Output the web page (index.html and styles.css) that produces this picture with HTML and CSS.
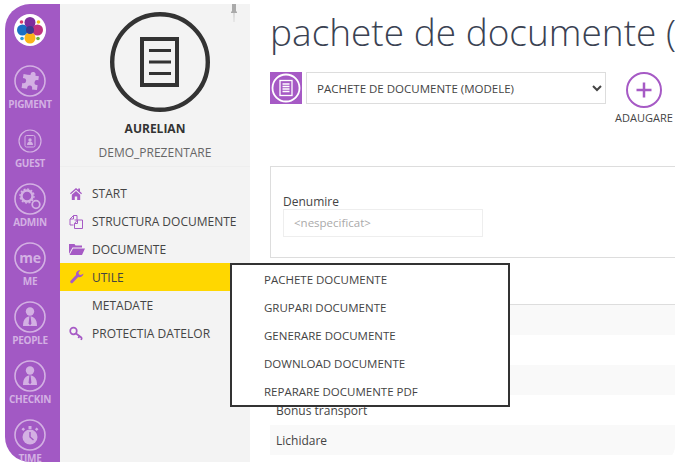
FILE: index.html
```html
<!doctype html>
<html lang="en">
  <head>
    <meta charset="UTF-8" />
    <title>Pachete de documente</title>
    <link rel="stylesheet" href="styles.css">
  </head>
  <body>
    <div class="app">
      <!-- purple module rail -->
      <nav class="rail">
        <div class="rail-logo">
          <svg width="32" height="32" viewBox="0 0 32 32">
            <circle cx="16" cy="16" r="16" fill="#fff"/>
            <circle cx="8.500" cy="16" r="5.500" fill="#1a6fc4"/>
            <circle cx="23.500" cy="16" r="5.500" fill="#c0317f"/>
            <circle cx="16" cy="24" r="5.500" fill="#fbb317"/>
            <circle cx="16" cy="8.500" r="5.500" fill="#7d2d9c"/>
            <circle cx="16" cy="16" r="4" fill="#3e3a8c"/>
            <circle cx="7.500" cy="8" r="1.800" fill="#d93a6a"/>
            <circle cx="24.500" cy="8" r="1.800" fill="#f2c21b"/>
            <circle cx="8" cy="24.500" r="1.800" fill="#2b9ae0"/>
            <circle cx="24" cy="24.500" r="1.800" fill="#6db33f"/>
          </svg>
        </div>
        <div class="rail-item">
          <svg class="rail-icon" viewBox="0 0 32 32">
            <circle cx="16" cy="16" r="15" class="ring"/>
            <path class="fill" d="M13 9h3v-1a2.500 2.500 0 0 1 5 0v1h3.500v4h-1a2.500 2.500 0 0 0 0 5h1v5h-5v-1a2.500 2.500 0 0 0-5 0v1h-5.500v-5h1a2.500 2.500 0 0 0 0-5h-1v-4z" transform="translate(-.5 1) rotate(8 16 16)"/>
          </svg>
          <span>PIGMENT</span>
        </div>
        <div class="rail-item">
          <svg class="rail-icon small" viewBox="0 0 24 24">
            <circle cx="12" cy="12" r="11" class="ring thin"/>
            <rect x="7" y="6.500" width="10" height="11.500" rx="1.500" class="line"/>
            <circle cx="12" cy="11" r="1.700" class="fill"/>
            <path class="fill" d="M9 16c0-2.500 1.500-3.500 3-3.500s3 1 3 3.500z"/>
          </svg>
          <span>GUEST</span>
        </div>
        <div class="rail-item">
          <svg class="rail-icon" viewBox="0 0 32 32">
            <circle cx="16" cy="16" r="15" class="ring"/>
            <circle cx="13" cy="13" r="5.500" class="gear"/>
            <circle cx="13" cy="13" r="7" class="gear-teeth"/>
            <circle cx="22" cy="21.500" r="3.800" class="gear2"/>
          </svg>
          <span>ADMIN</span>
        </div>
        <div class="rail-item">
          <svg class="rail-icon" viewBox="0 0 32 32">
            <circle cx="16" cy="16" r="15" class="ring"/>
            <text x="16" y="20.500" text-anchor="middle" class="me-text">me</text>
          </svg>
          <span>ME</span>
        </div>
        <div class="rail-item">
          <svg class="rail-icon" viewBox="0 0 32 32">
            <circle cx="16" cy="16" r="15" class="ring"/>
            <circle cx="16" cy="10.500" r="4.200" class="fill"/>
            <path class="fill" d="M9 25c0-7 3-9.500 7-9.500s7 2.500 7 9.500z"/>
            <path class="tie" d="M15.400 15.500h1.200l.8 7-1.400 2-1.400-2z"/>
          </svg>
          <span>PEOPLE</span>
        </div>
        <div class="rail-item">
          <svg class="rail-icon" viewBox="0 0 32 32">
            <circle cx="16" cy="16" r="15" class="ring"/>
            <circle cx="16" cy="10.500" r="4.200" class="fill"/>
            <path class="fill" d="M9 25c0-7 3-9.500 7-9.500s7 2.500 7 9.500z"/>
            <path class="tie" d="M15.400 15.500h1.200l.8 7-1.400 2-1.400-2z"/>
          </svg>
          <span>CHECKIN</span>
        </div>
        <div class="rail-item">
          <svg class="rail-icon" viewBox="0 0 32 32">
            <circle cx="16" cy="16" r="15" class="ring"/>
            <circle cx="16" cy="18" r="7.500" class="fill"/>
            <rect x="14.500" y="7" width="3" height="3" class="fill"/>
            <rect x="21.500" y="9" width="2.500" height="2.500" class="fill" transform="rotate(45 22.700 10.200)"/>
            <rect x="8" y="9" width="2.500" height="2.500" class="fill" transform="rotate(-45 9.200 10.200)"/>
            <path class="hand" d="M16 13v5l3.500 3"/>
          </svg>
          <span>TIME</span>
        </div>
      </nav>

      <!-- user + menu -->
      <aside class="side">
        <svg class="pin" width="8" height="18" viewBox="0 0 8 18">
          <path d="M2 0h4v7l1 1v1H1V8l1-1z" fill="#aaa"/>
          <path d="M3.500 9h1l-.3 9h-.4z" fill="#bbb"/>
        </svg>
        <div class="user">
          <svg class="avatar" width="100" height="100" viewBox="0 0 100 100">
            <circle cx="50" cy="50" r="47.800" fill="none" stroke="#333" stroke-width="4.400"/>
            <rect x="32" y="27" width="35" height="46" fill="none" stroke="#333" stroke-width="4"/>
            <path d="M39 38.500h22M39 50h22M39 61.500h22" stroke="#333" stroke-width="3"/>
          </svg>
          <div class="user-name">AURELIAN</div>
          <div class="user-org">DEMO_PREZENTARE</div>
        </div>
        <ul class="menu">
          <li class="menu-item">
            <svg class="menu-icon" viewBox="0 0 16 16"><path class="mi-fill" d="M7 3 1 8.300l.8.900L7 4.700l5.200 4.500.8-.9-2-1.800V3.500H9.200v1.300zM2.800 9.800 7 6l4.200 3.800V15H8.200v-3.500H5.800V15h-3z"/></svg>
            START
          </li>
          <li class="menu-item">
            <svg class="menu-icon" viewBox="0 0 16 16"><path class="mi-line" d="M4.500 12H1V6l3.500-3.500h3.500V7M4.500 2.500V6H1M5.500 7H13.500V15.500H5.500V10.500L8.500 7V10.500H5.500"/></svg>
            STRUCTURA DOCUMENTE
          </li>
          <li class="menu-item">
            <svg class="menu-icon" viewBox="0 0 16 16"><path class="mi-fill" d="M0 3h5.500l1 1.500H13V6.500H3.500L0 13zM4 7.500h12l-3 6.500H.5z"/></svg>
            DOCUMENTE
          </li>
          <li class="menu-item active">
            <svg class="menu-icon" viewBox="0 0 16 16"><path class="mi-fill" d="M14.500 4.500a4 4 0 0 1-5.300 3.500L3.800 13.800a1.500 1.500 0 0 1-2.200-2.100L7 6a4 4 0 0 1 4.500-4.700L9.500 3.500l.5 2 2 .5z"/></svg>
            UTILE
          </li>
          <li class="menu-item"><span class="menu-icon"></span>METADATE</li>
          <li class="menu-item">
            <svg class="menu-icon" viewBox="0 0 16 16"><circle class="mi-line key" cx="4.500" cy="6" r="3.300"/><path class="mi-line key" d="m7 8.500 6 4.500M10.500 11l-1.200 2M13 13l-1 1.800"/></svg>
            PROTECTIA DATELOR
          </li>
        </ul>
      </aside>

      <main class="main">
        <h1 class="page-title">pachete de documente (</h1>
        <div class="toolbar">
          <div class="module-icon">
            <svg width="32" height="32" viewBox="0 0 32 32">
              <circle cx="16" cy="16" r="13.500" fill="none" stroke="#fff" stroke-width="1.800"/>
              <rect x="10" y="8.500" width="12" height="15" fill="none" stroke="#fff" stroke-width="1.300"/>
              <path d="M12.500 12h7M12.500 14.500h7M12.500 17h7M12.500 19.500h7" stroke="#fff" stroke-width="1.300"/>
            </svg>
          </div>
          <select class="model-select">
            <option>PACHETE DE DOCUMENTE (MODELE)</option>
          </select>
          <div class="add-btn">
            <svg width="36" height="36" viewBox="0 0 36 36">
              <circle cx="18" cy="18" r="17" fill="none" stroke="#a65ac5" stroke-width="2"/>
              <path d="M18 10.500v15M10.500 18h15" stroke="#a65ac5" stroke-width="2.500"/>
            </svg>
            <span>ADAUGARE</span>
          </div>
        </div>
        <div class="filter-box">
          <label class="field-label">Denumire</label>
          <div class="field-input">&lt;nespecificat&gt;</div>
        </div>
        <div class="rows">
          <div class="row alt"></div>
          <div class="row"></div>
          <div class="row alt"></div>
          <div class="row">Bonus transport</div>
          <div class="row alt">Lichidare</div>
        </div>
      </main>

      <!-- flyout over the content -->
      <ul class="flyout">
        <li>PACHETE DOCUMENTE</li>
        <li>GRUPARI DOCUMENTE</li>
        <li>GENERARE DOCUMENTE</li>
        <li>DOWNLOAD DOCUMENTE</li>
        <li>REPARARE DOCUMENTE PDF</li>
      </ul>
    </div>
  </body>
</html>
```

FILE: styles.css
```css
html, body {
  margin: 0;
  height: 100%;
  background: #fff;
  overflow: hidden;
}
body {
  padding: 4px 5px;
  box-sizing: border-box;
  font-family: "Open Sans", "Noto Sans", Arial, sans-serif;
  color: #444;
}
ul {
  list-style: none;
  margin: 0;
  padding: 0;
}
.app {
  position: relative;
  display: flex;
  width: 670px;
  height: 458px;
  overflow: hidden;
  border-radius: 25px 0 16px 25px;
  background: #fff;
}

/* Rail */
.rail {
  width: 55px;
  flex: none;
  background: #a259c4;
  display: flex;
  flex-direction: column;
  align-items: center;
  padding: 10px 5px 0 0;
  box-sizing: border-box;
  overflow: hidden;
}
.rail-logo {
  height: 32px;
  margin-bottom: 19px;
}
.rail-item {
  display: flex;
  flex-direction: column;
  align-items: center;
  height: 59px;
  flex: none;
  color: #d3b0e3;
  font-size: 10px;
  font-weight: 700;
  letter-spacing: -0.3px;
  line-height: 11px;
}
.rail-icon {
  width: 32px;
  height: 32px;
  margin-bottom: 2px;
}
.rail-icon.small {
  width: 24px;
  height: 24px;
  margin: 5px 0 5px;
}
.ring {
  fill: none;
  stroke: #d3b0e3;
  stroke-width: 1.600;
}
.ring.thin {
  stroke-width: 1.200;
}
.fill {
  fill: #d3b0e3;
}
.line {
  fill: none;
  stroke: #d3b0e3;
  stroke-width: 1;
}
.gear {
  fill: none;
  stroke: #d3b0e3;
  stroke-width: 2.400;
}
.gear-teeth {
  fill: none;
  stroke: #d3b0e3;
  stroke-width: 1.400;
  stroke-dasharray: 2 1.660;
}
.gear2 {
  fill: none;
  stroke: #d3b0e3;
  stroke-width: 1.800;
}
.tie {
  fill: #a259c4;
}
.hand {
  fill: none;
  stroke: #a259c4;
  stroke-width: 1.400;
}
.me-text {
  font-size: 14px;
  font-weight: 700;
  fill: #d3b0e3;
  font-family: "Open Sans", sans-serif;
}

/* Side */
.side {
  position: relative;
  width: 190px;
  flex: none;
  background: #f3f3f3;
}
.pin {
  position: absolute;
  top: 0;
  right: 12px;
}
.user {
  display: flex;
  flex-direction: column;
  align-items: center;
  padding-top: 8px;
  height: 163px;
  box-sizing: border-box;
  border-bottom: 1px solid #eee;
}
.avatar {
  margin-bottom: 9px;
  margin-left: 10px;
}
.user-name {
  font-size: 12px;
  font-weight: 700;
  color: #333;
  line-height: 16px;
}
.user-org {
  font-size: 12px;
  color: #666;
  margin-top: 8px;
  line-height: 16px;
}
.menu {
  padding-top: 12px;
}
.menu-item {
  display: flex;
  align-items: center;
  height: 28px;
  padding-left: 9px;
  font-size: 12px;
  color: #444;
  white-space: nowrap;
}
.menu-item.active {
  background: #ffd700;
}
.menu-icon {
  width: 16px;
  height: 16px;
  flex: none;
  margin-right: 7px;
}
.mi-fill {
  fill: #a65ac5;
}
.mi-line {
  fill: none;
  stroke: #a65ac5;
  stroke-width: 1;
}
.mi-line.key {
  stroke-width: 1.700;
}

/* Main */
.main {
  flex: 1;
  min-width: 0;
  padding-left: 20px;
  overflow: hidden;
}
.page-title {
  margin: 3px 0 0;
  font-size: 37px;
  font-weight: 300;
  line-height: 50px;
  color: #3a4252;
  white-space: nowrap;
}
.toolbar {
  display: flex;
  align-items: flex-start;
  margin-top: 15px;
  height: 94px;
}
.module-icon {
  width: 32px;
  height: 32px;
  flex: none;
  background: #a65ac5;
  margin-right: 4px;
}
.model-select {
  width: 300px;
  height: 32px;
  flex: none;
  border: 1px solid #ddd;
  background: #fff;
  font-family: inherit;
  font-size: 11.500px;
  color: #444;
  padding-left: 6px;
}
.add-btn {
  display: flex;
  flex-direction: column;
  align-items: center;
  width: 60px;
  flex: none;
  margin-left: 8px;
  font-size: 11px;
  color: #444;
  line-height: 14px;
}
.add-btn svg {
  margin-bottom: 3px;
}
.filter-box {
  border: 1px solid #ddd;
  border-right: none;
  height: 92px;
  box-sizing: border-box;
  padding: 27px 12px 0;
}
.field-label {
  display: block;
  font-size: 12px;
  line-height: 16px;
  color: #444;
}
.field-input {
  width: 200px;
  height: 28px;
  box-sizing: border-box;
  border: 1px solid #eee;
  background: #fff;
  margin-top: -1px;
  padding-left: 10px;
  font-size: 11.500px;
  line-height: 26px;
  color: #aaa;
}
.rows {
  margin-top: 46px;
  border-top: 1px solid #ddd;
}
.row {
  height: 30px;
  line-height: 32px;
  padding-left: 6px;
  font-size: 12px;
  color: #444;
}
.row.alt {
  background: #f9f9f9;
}

/* Flyout */
.flyout {
  position: absolute;
  left: 225px;
  top: 259px;
  width: 280px;
  height: 144px;
  box-sizing: border-box;
  border: 2px solid #333;
  background: #fff;
  padding: 1px 0 0 32px;
}
.flyout li {
  height: 28px;
  line-height: 28px;
  font-size: 11.500px;
  color: #444;
  white-space: nowrap;
}
```
